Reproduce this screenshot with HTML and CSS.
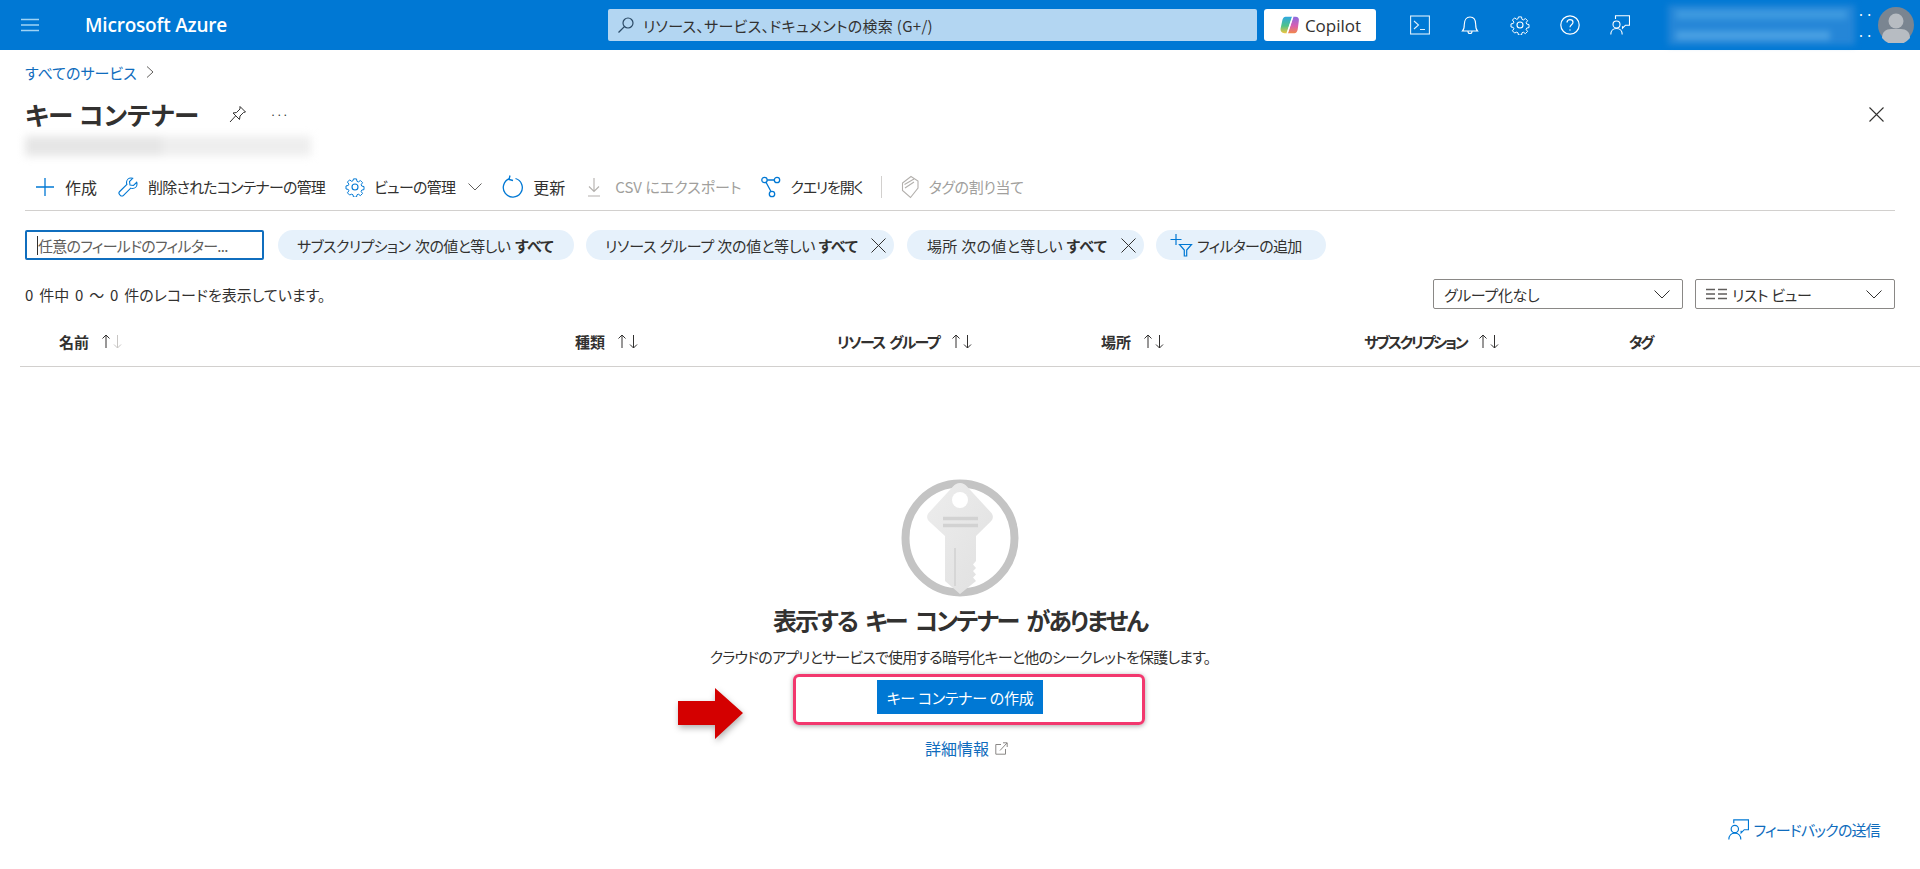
FILE: index.html
```html
<!DOCTYPE html>
<html lang="ja">

<head>
    <meta charset="UTF-8">
    <meta name="viewport" content="width=device-width, initial-scale=1.0">
    <title>キー コンテナー - Microsoft Azure</title>
    <link rel="stylesheet" href="styles.css">
</head>

<body>

    <header class="topbar">
        <button class="hamburger" aria-label="menu">
            <svg width="18" height="14" viewBox="0 0 18 14"><path d="M0 1.5h18M0 7h18M0 12.5h18" stroke="#9fd3f5" stroke-width="1.4" fill="none"/></svg>
        </button>
        <div class="brand">Microsoft Azure</div>
        <div class="search">
            <svg width="18" height="18" viewBox="0 0 18 18"><circle cx="11" cy="7" r="5" fill="none" stroke="#2b4a66" stroke-width="1.2"/><path d="M7.4 10.6 1.5 16.5" stroke="#2b4a66" stroke-width="1.3"/></svg>
            <span>リソース、サービス、ドキュメントの検索 (G+/)</span>
        </div>
        <button class="copilot">
            <svg width="22" height="22" viewBox="0 0 20 20">
                <defs>
                    <linearGradient id="cpleft" x1="0" y1="0" x2="0" y2="1">
                        <stop offset="0" stop-color="#2fa8e0"/>
                        <stop offset=".55" stop-color="#4fc28a"/>
                        <stop offset="1" stop-color="#f2c53d"/>
                    </linearGradient>
                    <linearGradient id="cpright" x1="0" y1="0" x2="0" y2="1">
                        <stop offset="0" stop-color="#8a6be0"/>
                        <stop offset=".55" stop-color="#d85fb0"/>
                        <stop offset="1" stop-color="#f2874a"/>
                    </linearGradient>
                </defs>
                <path d="M6 2.500h6l-5 15H5C2.500 17.500 1 15.500 1.500 13L3 6c.4-2 1.500-3.500 3-3.500z" fill="url(#cpleft)"/>
                <path d="M13 2.500h2c2.500 0 3.500 1.500 3 4L17 14c-.4 2-1.500 3.500-3 3.500H8z" fill="url(#cpright)"/>
                <path d="M12.500 2.500 7.500 17.500" stroke="#fff" stroke-width="1.300"/>
            </svg>
            <span>Copilot</span>
        </button>
        <nav class="top-icons">
            <a class="top-icon"><svg width="20" height="20" viewBox="0 0 20 20" fill="none" stroke="#dff0fb" stroke-width="1.1"><rect x=".6" y="1" width="18.800" height="18"/><path d="m4 6 4.500 4L4 14M10 14.500h5"/></svg></a>
            <a class="top-icon"><svg width="20" height="20" viewBox="0 0 20 20" fill="none" stroke="#fff" stroke-width="1.1"><path d="M2.500 16c1.500-1.500 1.800-3 1.800-6.500C4.300 5 6.500 2 10 2s5.700 3 5.700 7.500c0 3.500.3 5 1.800 6.500zM8 16.500c0 1.200.8 2 2 2s2-.8 2-2"/></svg></a>
            <a class="top-icon"><svg width="20" height="20" viewBox="0 0 20 20" fill="none" stroke="#fff" stroke-width="1.1"><circle cx="10" cy="10" r="3"/><path d="M8.300 1h3.400l.5 2.700 1.500.7 2.300-1.600 2.400 2.400-1.600 2.300.7 1.500 2.500.5v3.400l-2.500.5-.7 1.500 1.600 2.300-2.400 2.400-2.300-1.600-1.500.7-.5 2.500H8.300l-.5-2.500-1.500-.7L4 18.900l-2.400-2.400 1.600-2.300-.7-1.500L0 12.200V8.800l2.500-.5.700-1.500-1.600-2.300L4 2.100l2.300 1.600 1.500-.7z" transform="translate(1 1) scale(.9)"/></svg></a>
            <a class="top-icon"><svg width="20" height="20" viewBox="0 0 20 20" fill="none" stroke="#fff" stroke-width="1.2"><circle cx="10" cy="10" r="9.200"/><path d="M7 7.500C7 5.700 8.300 4.700 10 4.700s3 1 3 2.600c0 2.500-3 2.400-3 5"/><circle cx="10" cy="15" r=".7" fill="#fff" stroke="none"/></svg></a>
            <a class="top-icon"><svg width="20" height="20" viewBox="0 0 20 20" fill="none" stroke="#fff" stroke-width="1.1"><path d="M5.500 4V.8h14v9.400h-4l-3 3v-2"/><circle cx="6.500" cy="9.500" r="3.500"/><path d="M.8 19.500c0-3.500 2.300-6 5.700-6s5.700 2.500 5.700 6"/></svg></a>
        </nav>
        <div class="account">
            <div class="account-blur">
                <span class="blur-line"></span>
                <span class="blur-line short"></span>
            </div>
            <div class="account-dots">
                <span>· ·</span>
                <span>· ·</span>
            </div>
            <div class="avatar">
                <svg width="36" height="36" viewBox="0 0 36 36"><circle cx="18" cy="18" r="18" fill="#7a8591"/><circle cx="18" cy="14" r="7.500" fill="#b7bcc2"/><path d="M4 31c0-6 4-9 9-9h10c5 0 9 3 9 9a18 18 0 0 1-28 0z" fill="#b7bcc2"/></svg>
            </div>
        </div>
    </header>

    <main class="page">
        <div class="breadcrumb">
            <a class="link">すべてのサービス</a>
            <svg width="8" height="12" viewBox="0 0 8 12"><path d="m1 .5 6 5.500-6 5.500" fill="none" stroke="#605e5c"/></svg>
        </div>

        <div class="title-row">
            <h1>キー コンテナー</h1>
            <svg class="pin" width="18" height="18" viewBox="0 0 18 18" fill="none" stroke="#323130"><path d="M11 1.500 16.500 7l-2 .5-3.500 3.500-.5 3.500L4 8l3.500-.5L11 4z"/><path d="M6.500 11 1 17"/></svg>
            <span class="more">···</span>
            <svg class="close" width="15" height="15" viewBox="0 0 15 15"><path d="m.5.500 14 14M14.500.500l-14 14" stroke="#323130" stroke-width="1.100"/></svg>
        </div>
        <div class="subtitle-blur"></div>

        <div class="commandbar">
            <a class="cmd"><svg width="18" height="18" viewBox="0 0 18 18"><path d="M9 0v18M0 9h18" stroke="#0078d4" stroke-width="1.300"/></svg><span class="cmd-wide cmd-plus">作成</span></a>
            <a class="cmd cmd-del"><svg width="20" height="20" viewBox="0 0 20 20" fill="none" stroke="#0078d4" stroke-width="1.100"><path d="M13 1c-2.500 0-4.500 2-4.500 4.500 0 .7.100 1.300.4 1.800L1.700 14.500c-.9.900-.9 2.300 0 3.200l.6.600c.9.900 2.300.9 3.200 0l7.200-7.200c.5.300 1.100.4 1.800.4C17 11.500 19 9.500 19 7c0-.6-.1-1.200-.3-1.700L15.500 8.500 12 8 11.500 4.500 14.700 1.300C14.200 1.100 13.600 1 13 1z"/></svg><span>削除されたコンテナーの管理</span></a>
            <a class="cmd"><svg width="20" height="20" viewBox="0 0 20 20" fill="none" stroke="#0078d4" stroke-width="1.100"><circle cx="10" cy="10" r="3"/><path d="M8.300 1h3.400l.5 2.700 1.500.7 2.300-1.600 2.400 2.400-1.600 2.300.7 1.500 2.500.5v3.400l-2.500.5-.7 1.500 1.600 2.300-2.400 2.400-2.300-1.600-1.500.7-.5 2.500H8.300l-.5-2.500-1.500-.7L4 18.900l-2.400-2.400 1.600-2.300-.7-1.500L0 12.200V8.800l2.500-.5.700-1.500-1.600-2.300L4 2.100l2.300 1.600 1.500-.7z" transform="translate(1 1) scale(.9)"/></svg><span class="cmd-view">ビューの管理</span><svg class="cmd-caret" width="14" height="8" viewBox="0 0 14 8"><path d="m.5.500 6.500 6.500 6.500-6.500" fill="none" stroke="#605e5c"/></svg></a>
            <a class="cmd"><svg width="22" height="24" viewBox="0 0 22 24" fill="none" stroke="#0078d4" stroke-width="1.300"><path d="M13.500 3.500a9.500 9.500 0 1 1-6 .2"/><path d="M8 .5 7 4.500l4 1"/></svg><span class="cmd-wide">更新</span></a>
            <a class="cmd cmd-csv disabled"><svg width="18" height="20" viewBox="0 0 18 20" fill="none" stroke="#b3b0ad" stroke-width="1.100"><path d="M9 1v13M4 9.500l5 5 5-5M3 19h12"/></svg><span>CSV にエクスポート</span></a>
            <a class="cmd"><svg width="20" height="24" viewBox="0 0 20 24" fill="none" stroke="#0078d4" stroke-width="1.300"><circle cx="3.500" cy="5" r="2.700"/><circle cx="16" cy="5" r="2.700"/><circle cx="11" cy="19" r="2.700"/><path d="M6.200 5h7.100M5 7.200l5 9.300"/></svg><span class="cmd-query">クエリを開く</span></a>
            <i class="cmd-divider"></i>
            <a class="cmd disabled"><svg width="20" height="24" viewBox="0 0 20 24" fill="none" stroke="#b3b0ad" stroke-width="1.100"><path d="M11 1.500 18 6v7l-7.500 9.500-8-7V8z"/><path d="M4.500 9.500 14 4M5 13l9-6"/></svg><span class="tight">タグの割り当て</span></a>
        </div>

        <div class="filters">
            <div class="filter-input"><i class="caret"></i>任意のフィールドのフィルター...</div>
            <div class="pill pill-sub">サブスクリプション 次の値と等しい <b>すべて</b></div>
            <div class="pill pill-group">リソース グループ 次の値と等しい <b>すべて</b><svg class="pill-x" width="15" height="15" viewBox="0 0 15 15"><path d="m.5.500 14 14M14.500.500l-14 14" stroke="#323130"/></svg></div>
            <div class="pill pill-loc">場所 次の値と等しい <b>すべて</b><svg class="pill-x" width="15" height="15" viewBox="0 0 15 15"><path d="m.5.500 14 14M14.500.500l-14 14" stroke="#323130"/></svg></div>
            <div class="pill pill-add"><svg width="24" height="24" viewBox="0 0 24 24" fill="none" stroke="#0078d4" stroke-width="1.200"><path d="M6 1v11M.5 6.500h11"/><path d="M9.500 11.500h12l-4.800 5.500v6h-2.400v-6z"/></svg>フィルターの追加</div>
        </div>

        <div class="status-row">
            <span class="status-text">0 件中 0 ～ 0 件のレコードを表示しています。</span>
            <div class="selects">
                <div class="select select-group"><span class="tight">グループ化なし</span><svg width="16" height="9" viewBox="0 0 16 9"><path d="m.5.500 7.500 7.500 7.500-7.500" fill="none" stroke="#323130"/></svg></div>
                <div class="select select-view"><span class="view-label"><svg width="21" height="12" viewBox="0 0 21 12"><path d="M0 1.500h9M12 1.500h9M0 6h9M12 6h9M0 10.500h9M12 10.500h9" stroke="#605e5c" stroke-width="1.300"/></svg><span class="tight">リスト ビュー</span></span><svg width="16" height="9" viewBox="0 0 16 9"><path d="m.5.500 7.500 7.500 7.500-7.500" fill="none" stroke="#323130"/></svg></div>
            </div>
        </div>

        <div class="grid-head">
            <div class="col"><span>名前</span><svg class="sort" width="22" height="17" viewBox="0 0 22 17" fill="none" stroke="#323130"><path d="M5 15V2M1.500 5.500 5 2l3.500 3.500"/><path d="M16.500 2v13M13 11.500l3.500 3.500 3.500-3.500" stroke="#c8c6c4"/></svg></div>
            <div class="col"><span>種類</span><svg class="sort" width="22" height="17" viewBox="0 0 22 17" fill="none" stroke="#323130"><path d="M5 15V2M1.500 5.500 5 2l3.500 3.500"/><path d="M16.500 2v13M13 11.500l3.500 3.500 3.500-3.500"/></svg></div>
            <div class="col"><span class="col-rg">リソース グループ</span><svg class="sort" width="22" height="17" viewBox="0 0 22 17" fill="none" stroke="#323130"><path d="M5 15V2M1.500 5.500 5 2l3.500 3.500"/><path d="M16.500 2v13M13 11.500l3.500 3.500 3.500-3.500"/></svg></div>
            <div class="col"><span>場所</span><svg class="sort" width="22" height="17" viewBox="0 0 22 17" fill="none" stroke="#323130"><path d="M5 15V2M1.500 5.500 5 2l3.500 3.500"/><path d="M16.500 2v13M13 11.500l3.500 3.500 3.500-3.500"/></svg></div>
            <div class="col"><span class="col-sub">サブスクリプション</span><svg class="sort" width="22" height="17" viewBox="0 0 22 17" fill="none" stroke="#323130"><path d="M5 15V2M1.500 5.500 5 2l3.500 3.500"/><path d="M16.500 2v13M13 11.500l3.500 3.500 3.500-3.500"/></svg></div>
            <div class="col"><span class="col-tag">タグ</span></div>
        </div>

        <section class="empty">
            <svg class="key" width="120" height="120" viewBox="0 0 120 120">
                <defs>
                    <linearGradient id="keyfill" x1="0" y1="0" x2="1" y2="1">
                        <stop offset="0" stop-color="#ededed"/>
                        <stop offset="1" stop-color="#e0e0e0"/>
                    </linearGradient>
                </defs>
                <circle cx="60" cy="60" r="54.500" fill="none" stroke="#c4c4c4" stroke-width="8"/>
                <path d="M60 5c3 0 5 1.500 7 3.500l24 26c2.500 2.800 2.500 6 0 8.800L76 58v25l-3 3.500 3 3.500-3 3 3 3.500-3 3 3 3.500-16 13-15-13V58L29 43.300c-2.500-2.800-2.500-6 0-8.800l24-26C55 6.500 57 5 60 5z" fill="url(#keyfill)"/>
                <circle cx="60" cy="22" r="8" fill="#fff"/>
                <path d="M43 40.500h35M43 47.500h35" stroke="#d2d2d2" stroke-width="3.500"/>
                <path d="M55 70v38" stroke="#d6d6d6" stroke-width="2"/>
            </svg>
            <h2>表示する キー コンテナー がありません</h2>
            <p>クラウドのアプリとサービスで使用する暗号化キーと他のシークレットを保護します。</p>
            <div class="cta">
                <a class="primary">キー コンテナー の作成</a>
                <div class="highlight"></div>
                <svg class="red-arrow" width="70" height="56" viewBox="0 0 70 56"><path d="M1 15h37V2l28 25-28 26V39H1z" fill="#d40000"/></svg>
            </div>
            <a class="link more-link"><span>詳細情報</span><svg width="13" height="13" viewBox="0 0 13 13" fill="none" stroke="#8a8886"><path d="M6 2.500H.8v9.700h9.700V7M5 8.500 12 1M8 .8h4.200V5"/></svg></a>
        </section>

        <footer class="feedback">
            <svg width="21" height="21" viewBox="0 0 20 20" fill="none" stroke="#0078d4" stroke-width="1.100"><path d="M5.500 4V.8h14v9.400h-4l-3 3v-2"/><circle cx="6.500" cy="9.500" r="3.500"/><path d="M.8 19.500c0-3.500 2.300-6 5.700-6s5.700 2.500 5.700 6"/></svg>
            <a class="link">フィードバックの送信</a>
        </footer>
    </main>

</body>

</html>
```

FILE: styles.css
```css
* {
    box-sizing: border-box;
}

html,
body {
    height: 100%;
}

body {
    margin: 0;
    overflow: hidden;
    display: flex;
    flex-direction: column;
    background-color: #fff;
    color: #323130;
    font-family: "Noto Sans CJK JP", "Open Sans", sans-serif;
    font-size: 15px;
    font-feature-settings: "palt";
}

a {
    text-decoration: none;
}

.link {
    color: #0f6cbd;
}

.tight {
    letter-spacing: -0.35px;
}

/* top bar */
.topbar {
    height: 50px;
    flex: none;
    display: flex;
    align-items: center;
    background-color: #0078d4;
    color: #fff;
}

.hamburger {
    width: 21px;
    margin-left: 21px;
    padding: 0;
    border: 0;
    display: flex;
    background: none;
}

.brand {
    margin-left: 43px;
    width: 523px;
    font-family: "Open Sans", sans-serif;
    font-size: 19px;
    font-weight: 600;
    letter-spacing: -0.2px;
}

.search {
    width: 649px;
    height: 32px;
    display: flex;
    align-items: center;
    gap: 8px;
    padding-left: 9px;
    border-radius: 2px;
    background-color: #b3d6f2;
    color: #323130;
    font-size: 15px;
    letter-spacing: 0.3px;
}

.copilot {
    width: 112px;
    height: 32px;
    margin-left: 7px;
    padding: 0;
    border: 0;
    border-radius: 3px;
    display: flex;
    align-items: center;
    justify-content: center;
    gap: 4px;
    background-color: #fff;
    color: #323130;
    font-family: "Open Sans", sans-serif;
    font-size: 17px;
}

.top-icons {
    display: flex;
    margin-left: 19px;
}

.top-icon {
    width: 50px;
    height: 50px;
    display: flex;
    align-items: center;
    justify-content: center;
}

.account {
    display: flex;
    align-items: center;
    margin-left: 23px;
}

.account-blur {
    width: 187px;
    height: 40px;
    display: flex;
    flex-direction: column;
    justify-content: center;
    gap: 12px;
    padding: 0 8px;
    background-color: #2586d7;
    filter: blur(3px);
}

.blur-line {
    height: 9px;
    background-color: #3f9be0;
}

.blur-line.short {
    width: 90%;
    background-color: #4ba1e3;
}

.account-dots {
    width: 23px;
    height: 31px;
    display: flex;
    flex-direction: column;
    justify-content: space-between;
    padding-left: 3px;
    font-size: 10px;
    line-height: 10px;
    font-weight: 700;
}

.avatar {
    width: 36px;
    height: 36px;
    display: flex;
}

/* page */
.page {
    flex: 1;
    min-height: 0;
    display: flex;
    flex-direction: column;
}

.breadcrumb {
    height: 20px;
    margin: 12px 0 0 25px;
    display: flex;
    align-items: center;
    gap: 9px;
    font-size: 15px;
}

.title-row {
    height: 40px;
    margin: 12px 0 0 25px;
    display: flex;
    align-items: center;
}

h1 {
    margin: 0;
    width: 204px;
    font-size: 25.5px;
    line-height: 40px;
    font-weight: 600;
}

.more {
    margin-left: 23px;
    font-size: 11px;
}

.close {
    margin-left: auto;
    margin-right: 36px;
}

.subtitle-blur {
    width: 286px;
    height: 20px;
    margin: 2px 0 0 25px;
    background: linear-gradient(90deg, #e6e6e6 0 48%, #eeeeee 48% 100%);
    filter: blur(4px);
}

.commandbar {
    height: 55px;
    margin: 0 25px;
    padding: 7px 0 0 11px;
    display: flex;
    align-items: center;
    gap: 20px;
    border-bottom: 1px solid #d2d0ce;
}

.cmd {
    display: flex;
    align-items: center;
    gap: 9px;
    color: #323130;
    white-space: nowrap;
}

.cmd-wide {
    font-size: 16px;
}

.cmd-plus {
    margin-left: 2px;
}

.cmd-del {
    margin-left: 1px;
    gap: 10px;
    letter-spacing: -0.8px;
}

.cmd-view {
    letter-spacing: -0.75px;
}

.cmd-csv {
    gap: 12px;
}

.cmd-query {
    letter-spacing: -1.2px;
}

.cmd-caret {
    margin-left: 4px;
}

.cmd.disabled {
    color: #a19f9d;
}

.cmd-divider {
    width: 1px;
    height: 22px;
    margin-left: -2px;
    margin-right: -2px;
    background-color: #d2d0ce;
}

.filters {
    display: flex;
    gap: 12px;
    margin: 19px 0 0 25px;
    align-items: center;
}

.filter-input {
    width: 239px;
    height: 30px;
    padding-left: 10px;
    border: 2px solid #106ebe;
    border-radius: 2px;
    display: flex;
    align-items: center;
    color: #605e5c;
    letter-spacing: -0.7px;
}

.caret {
    width: 1px;
    height: 19px;
    background-color: #323130;
}

.pill {
    height: 30px;
    display: flex;
    align-items: center;
    padding-left: 19px;
    border-radius: 15px;
    background-color: #e6f1fb;
    white-space: pre;
}

.pill b {
    font-weight: 700;
}

.pill-sub {
    width: 296px;
    margin-left: 2px;
    letter-spacing: -0.6px;
    word-spacing: 2px;
}

.pill-group {
    width: 308px;
    letter-spacing: -0.2px;
}

.pill-loc {
    width: 237px;
    margin-left: 1px;
    padding-left: 20px;
    letter-spacing: 0.3px;
}

.pill-x {
    margin-left: auto;
    margin-right: 8px;
}

.pill-add {
    width: 170px;
    padding-left: 14px;
    gap: 3px;
    letter-spacing: -0.7px;
}

.status-row {
    height: 30px;
    margin: 19px 25px 0;
    display: flex;
    align-items: center;
    justify-content: space-between;
}

.status-text {
    word-spacing: 2.5px;
}

.selects {
    display: flex;
    gap: 12px;
}

.select {
    height: 30px;
    padding: 0 12px 0 10px;
    display: flex;
    align-items: center;
    justify-content: space-between;
    border: 1px solid #8a8886;
    border-radius: 2px;
}

.select-group {
    width: 250px;
}

.select-view {
    width: 200px;
}

.view-label {
    display: flex;
    align-items: center;
    gap: 5px;
}

.grid-head {
    height: 58px;
    margin-left: 20px;
    padding: 8px 0 0 39px;
    display: grid;
    grid-template-columns: 516px 262px 264px 263px 265px 1fr;
    align-items: center;
    border-bottom: 1px solid #d2d0ce;
    font-weight: 700;
    white-space: pre;
}

.col {
    display: flex;
    align-items: center;
}

.col-rg {
    letter-spacing: -1.7px;
    word-spacing: 3px;
}

.col-sub {
    letter-spacing: -2.2px;
}

.col-tag {
    letter-spacing: -2.5px;
}

.sort {
    margin-left: 12px;
}

/* empty state */
.empty {
    display: flex;
    flex-direction: column;
    align-items: center;
    padding-top: 111px;
}

.key {
    display: block;
}

h2 {
    margin: 4px 0 0;
    font-size: 24px;
    line-height: 36px;
    font-weight: 600;
    letter-spacing: -2px;
    word-spacing: 5px;
}

.empty p {
    margin: 8px 0 0;
    line-height: 22px;
    letter-spacing: -0.8px;
}

.cta {
    margin-top: 12px;
    position: relative;
    height: 34px;
}

.primary {
    height: 34px;
    width: 166px;
    display: flex;
    align-items: center;
    justify-content: center;
    background-color: #0078d4;
    color: #fff;
    white-space: pre;
    letter-spacing: -0.3px;
}

.highlight {
    position: absolute;
    left: -84px;
    right: -102px;
    top: -6px;
    bottom: -11px;
    border: 3px solid #f2386e;
    border-radius: 6px;
    box-shadow: 0 1px 5px rgba(0, 0, 0, 0.35);
}

.red-arrow {
    position: absolute;
    left: -200px;
    top: 6px;
    filter: drop-shadow(1px 3px 3px rgba(0, 0, 0, 0.3));
}

.more-link {
    margin-top: 22px;
    padding-left: 13px;
    display: flex;
    align-items: center;
    gap: 6px;
    font-size: 16px;
}

.feedback {
    margin: auto 40px 29px auto;
    display: flex;
    align-items: center;
    gap: 5px;
    letter-spacing: -0.8px;
}
```
